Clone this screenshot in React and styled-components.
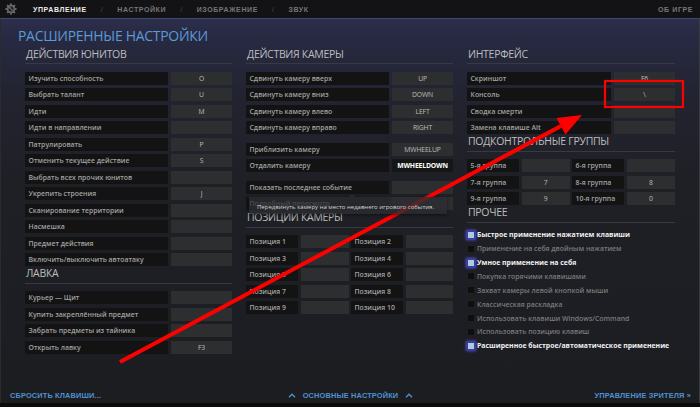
import React from "react";
import styled, { createGlobalStyle } from "styled-components";

const Global = createGlobalStyle`
  html, body { margin: 0; padding: 0; background: #0b0b0c; }
  body { width: 700px; height: 407px; overflow: hidden; font-family: "Open Sans", "Noto Sans", sans-serif; }
  * { box-sizing: border-box; }
`;

const Screen = styled.div`
  position: relative;
  width: 700px;
  height: 407px;
  display: flex;
  flex-direction: column;
  background: #0b0b0c;
`;

const TopBar = styled.div`
  flex: none;
  height: 19px;
  background: #131315;
  border-bottom: 1px solid #3b4876;
  display: flex;
  align-items: center;
  padding: 0 7px 0 5px;
  font-family: "Liberation Sans", Arial, sans-serif;
  font-weight: 700;
  font-size: 7px;
  letter-spacing: 0.6px;
`;

const GearWrap = styled.div`
  width: 12px;
  height: 12px;
  margin-right: 16px;
  display: flex;
`;

const Tab = styled.span`
  color: ${(p) => (p.$active ? "#ececec" : "#767676")};
`;

const Sep = styled.span`
  color: #4a4a4a;
  margin: 0 14px;
  font-weight: 400;
`;

const About = styled.span`
  margin-left: auto;
  color: #787878;
`;

const Panel = styled.div`
  flex: none;
  height: 384px;
  background: linear-gradient(180deg, #2c2e4b 0px, #272941 22px, #22232f 80px, #1f2026 160px, #1c1d21 100%);
  border-left: 1px solid #2a2b31;
  border-right: 1px solid #3a3b40;
  display: flex;
  flex-direction: column;
  padding: 9.3px 24px 0 24px;
`;

const Title = styled.div`
  margin-left: -7px;
  font-size: 14px;
  line-height: 16px;
  color: #5a9ad6;
  letter-spacing: -0.3px;
  font-weight: 400;
`;

const Columns = styled.div`
  display: grid;
  grid-template-columns: 207px 207px 208px;
  column-gap: 14px;
  margin-top: 3.3px;
`;

const Column = styled.div`
  display: flex;
  flex-direction: column;
`;

const Header = styled.div`
  font-size: 10.5px;
  line-height: 12px;
  color: #bdbdbd;
  letter-spacing: -0.3px;
  padding: 0 0 3.5px 1px;
  border-bottom: 1px solid #383942;
  margin-bottom: 7.5px;
  margin-top: ${(p) => (p.$first ? "0" : "1px")};
  white-space: nowrap;
`;

const RowList = styled.div`
  display: flex;
  flex-direction: column;
  gap: 3.5px;
`;

const RowEl = styled.div`
  position: relative;
  display: grid;
  grid-template-columns: 1fr 61px;
  column-gap: 3px;
  height: 13px;
  margin-top: ${(p) => (p.$sep ? "5px" : "0")};
`;

const Label = styled.div`
  background: #131314;
  color: #a2a2a2;
  font-size: 6.9px;
  font-weight: 600;
  letter-spacing: 0px;
  line-height: 13px;
  padding-left: 3.5px;
  white-space: nowrap;
  overflow: hidden;
`;

const Key = styled.div`
  background: ${(p) => (p.$active ? "#161617" : "#2d2e30")};
  color: ${(p) => (p.$active ? "#ffffff" : "#bdbdbd")};
  font-size: 6.8px;
  font-weight: ${(p) => (p.$active ? 700 : 400)};
  letter-spacing: -0.15px;
  line-height: 13px;
  text-align: center;
  white-space: nowrap;
  overflow: hidden;
`;

const Grid4 = styled.div`
  display: grid;
  grid-template-columns: 52px 48px 52px 1fr;
  column-gap: 2.5px;
  row-gap: 3.5px;
  grid-auto-rows: 13px;
`;

const Tooltip = styled.div`
  position: absolute;
  left: 3px;
  top: 0;
  width: 198px;
  height: 17px;
  background: rgba(44, 45, 49, 0.78);
  box-shadow: 0 1px 3px rgba(0, 0, 0, 0.5);
  color: #d4d4d4;
  font-size: 6px;
  line-height: 8px;
  padding: 6px 0 0 8px;
  white-space: nowrap;
  z-index: 2;
  &::before {
    content: "";
    position: absolute;
    left: 100px;
    top: -3px;
    border-left: 3px solid transparent;
    border-right: 3px solid transparent;
    border-bottom: 3px solid rgba(44, 45, 49, 0.78);
  }
`;

const CheckList = styled.div`
  display: flex;
  flex-direction: column;
  margin-top: -2.3px;
`;

const CheckRow = styled.div`
  height: 13.9px;
  display: flex;
  align-items: center;
  gap: 2px;
  font-size: 6.9px;
  letter-spacing: 0px;
  white-space: nowrap;
  font-weight: ${(p) => (p.$on ? 700 : 600)};
  color: ${(p) => (p.$on ? "#f0f0f0" : "#7a7a7a")};
`;

const Box = styled.span`
  flex: none;
  width: 8px;
  height: 8px;
  background: ${(p) => (p.$on ? "#a9cdd9" : "#0e0e0f")};
  border: 1px solid ${(p) => (p.$on ? "#3b3aa0" : "#202022")};
  box-shadow: ${(p) => (p.$on ? "0 0 3px 1px #5a50e6" : "none")};
`;

const Footer = styled.div`
  margin: auto -23px 0 -23px;
  height: 15px;
  display: grid;
  grid-template-columns: 1fr auto 1fr;
  align-items: center;
  padding: 0 7px 0 8px;
  font-family: "Liberation Sans", Arial, sans-serif;
  font-weight: 700;
  font-size: 7.4px;
  letter-spacing: 0.15px;
  color: #4f91d0;
`;

const FootItem = styled.div`
  display: flex;
  align-items: center;
  gap: 7px;
  justify-self: ${(p) => p.$align || "start"};
  white-space: nowrap;
`;

const Overlay = styled.svg`
  position: absolute;
  left: 0;
  top: 0;
  pointer-events: none;
`;

function gearPath() {
  const teeth = 8;
  const step = (Math.PI * 2) / teeth;
  const cx = 12, cy = 12, ro = 11.5, ri = 8.6;
  const pts = [];
  for (let i = 0; i < teeth; i++) {
    const a = i * step;
    [[-0.3, ri], [-0.17, ro], [0.17, ro], [0.3, ri]].forEach(([f, r]) => {
      const ang = a + f * step;
      pts.push(`${(cx + r * Math.cos(ang)).toFixed(2)},${(cy + r * Math.sin(ang)).toFixed(2)}`);
    });
  }
  return pts.join(" ");
}
const GEAR = gearPath();

const Gear = () => (
  <svg width="12" height="12" viewBox="0 0 24 24">
    <polygon points={GEAR} fill="#656565" />
    <circle cx="12" cy="12" r="5" fill="#1e1e20" />
    <path d="M9 9 L15 15" stroke="#656565" strokeWidth="2.2" strokeLinecap="round" />
    <circle cx="9.3" cy="9.3" r="1.8" fill="#656565" />
  </svg>
);

const Chevron = () => (
  <svg width="8" height="5" viewBox="0 0 8 5">
    <polyline points="1,4.2 4,1.2 7,4.2" fill="none" stroke="#4f91d0" strokeWidth="1.4" />
  </svg>
);

const Row = ({ label, k, active, sep, children }) => (
  <RowEl $sep={sep}>
    <Label>{label}</Label>
    <Key $active={active}>{k}</Key>
    {children}
  </RowEl>
);

const Pairs = ({ items }) => (
  <Grid4>
    {items.map(([l, k]) => (
      <React.Fragment key={l}>
        <Label>{l}</Label>
        <Key>{k}</Key>
      </React.Fragment>
    ))}
  </Grid4>
);

const unitActions = [
  ["Изучить способность", "O"],
  ["Выбрать талант", "U"],
  ["Идти", "M"],
  ["Идти в направлении", ""],
  ["Патрулировать", "P"],
  ["Отменить текущее действие", "S"],
  ["Выбрать всех прочих юнитов", ""],
  ["Укрепить строения", "J"],
  ["Сканирование территории", ""],
  ["Насмешка", ""],
  ["Предмет действия", ""],
  ["Включить/выключить автоатаку", ""],
];

const shop = [
  ["Курьер — Щит", ""],
  ["Купить закреплённый предмет", ""],
  ["Забрать предметы из тайника", ""],
  ["Открыть лавку", "F3"],
];

const positions = [
  ["Позиция 1", ""], ["Позиция 2", ""],
  ["Позиция 3", ""], ["Позиция 4", ""],
  ["Позиция 5", ""], ["Позиция 6", ""],
  ["Позиция 7", ""], ["Позиция 8", ""],
  ["Позиция 9", ""], ["Позиция 10", ""],
];

const groups = [
  ["5-я группа", ""], ["6-я группа", ""],
  ["7-я группа", "7"], ["8-я группа", "8"],
  ["9-я группа", "9"], ["10-я группа", "0"],
];

const interfaceRows = [
  ["Скриншот", "F6"],
  ["Консоль", "\\"],
  ["Сводка смерти", ""],
  ["Замена клавише Alt", ""],
];

const misc = [
  ["Быстрое применение нажатием клавиши", true],
  ["Применение на себя двойным нажатием", false],
  ["Умное применение на себя", true],
  ["Покупка горячими клавишами", false],
  ["Захват камеры левой кнопкой мыши", false],
  ["Классическая раскладка", false],
  ["Использовать клавиши Windows/Command", false],
  ["Использовать позицию клавиш", false],
  ["Расширенное быстрое/автоматическое применение", true],
];

export default function App() {
  return (
    <Screen>
      <Global />
      <TopBar>
        <GearWrap><Gear /></GearWrap>
        <Tab $active>УПРАВЛЕНИЕ</Tab>
        <Sep>/</Sep>
        <Tab>НАСТРОЙКИ</Tab>
        <Sep>/</Sep>
        <Tab>ИЗОБРАЖЕНИЕ</Tab>
        <Sep>/</Sep>
        <Tab>ЗВУК</Tab>
        <About>ОБ ИГРЕ</About>
      </TopBar>
      <Panel>
        <Title>РАСШИРЕННЫЕ НАСТРОЙКИ</Title>
        <Columns>
          <Column>
            <Header $first>ДЕЙСТВИЯ ЮНИТОВ</Header>
            <RowList>
              {unitActions.map(([l, k]) => <Row key={l} label={l} k={k} />)}
            </RowList>
            <Header>ЛАВКА</Header>
            <RowList>
              {shop.map(([l, k]) => <Row key={l} label={l} k={k} />)}
            </RowList>
          </Column>
          <Column>
            <Header $first>ДЕЙСТВИЯ КАМЕРЫ</Header>
            <RowList>
              <Row label="Сдвинуть камеру вверх" k="UP" />
              <Row label="Сдвинуть камеру вниз" k="DOWN" />
              <Row label="Сдвинуть камеру влево" k="LEFT" />
              <Row label="Сдвинуть камеру вправо" k="RIGHT" />
              <Row sep label="Приблизить камеру" k="MWHEELUP" />
              <Row label="Отдалить камеру" k="MWHEELDOWN" active />
              <Row sep label="Показать последнее событие" k="" />
              <Row label="Подробный пересмотр" k="">
                <Tooltip>Передвинуть камеру на место недавнего игрового события.</Tooltip>
              </Row>
            </RowList>
            <Header>ПОЗИЦИИ КАМЕРЫ</Header>
            <Pairs items={positions} />
          </Column>
          <Column>
            <Header $first>ИНТЕРФЕЙС</Header>
            <RowList>
              {interfaceRows.map(([l, k]) => <Row key={l} label={l} k={k} />)}
            </RowList>
            <Header>ПОДКОНТРОЛЬНЫЕ ГРУППЫ</Header>
            <Pairs items={groups} />
            <Header>ПРОЧЕЕ</Header>
            <CheckList>
              {misc.map(([l, on]) => (
                <CheckRow key={l} $on={on}>
                  <Box $on={on} />
                  {l}
                </CheckRow>
              ))}
            </CheckList>
          </Column>
        </Columns>
        <Footer>
          <FootItem>СБРОСИТЬ КЛАВИШИ...</FootItem>
          <FootItem $align="center"><Chevron />ОСНОВНЫЕ НАСТРОЙКИ<Chevron /></FootItem>
          <FootItem $align="end">УПРАВЛЕНИЕ ЗРИТЕЛЯ »</FootItem>
        </Footer>
      </Panel>
      <Overlay width="700" height="407" viewBox="0 0 700 407">
        <rect x="605" y="81" width="78" height="26" fill="none" stroke="#ff0000" strokeWidth="2.2" />
        <line x1="120" y1="362" x2="561" y2="126" stroke="#ff0000" strokeWidth="4" />
        <polygon points="582,115 556.5,118 565.5,134.5" fill="#ff0000" />
      </Overlay>
    </Screen>
  );
}
